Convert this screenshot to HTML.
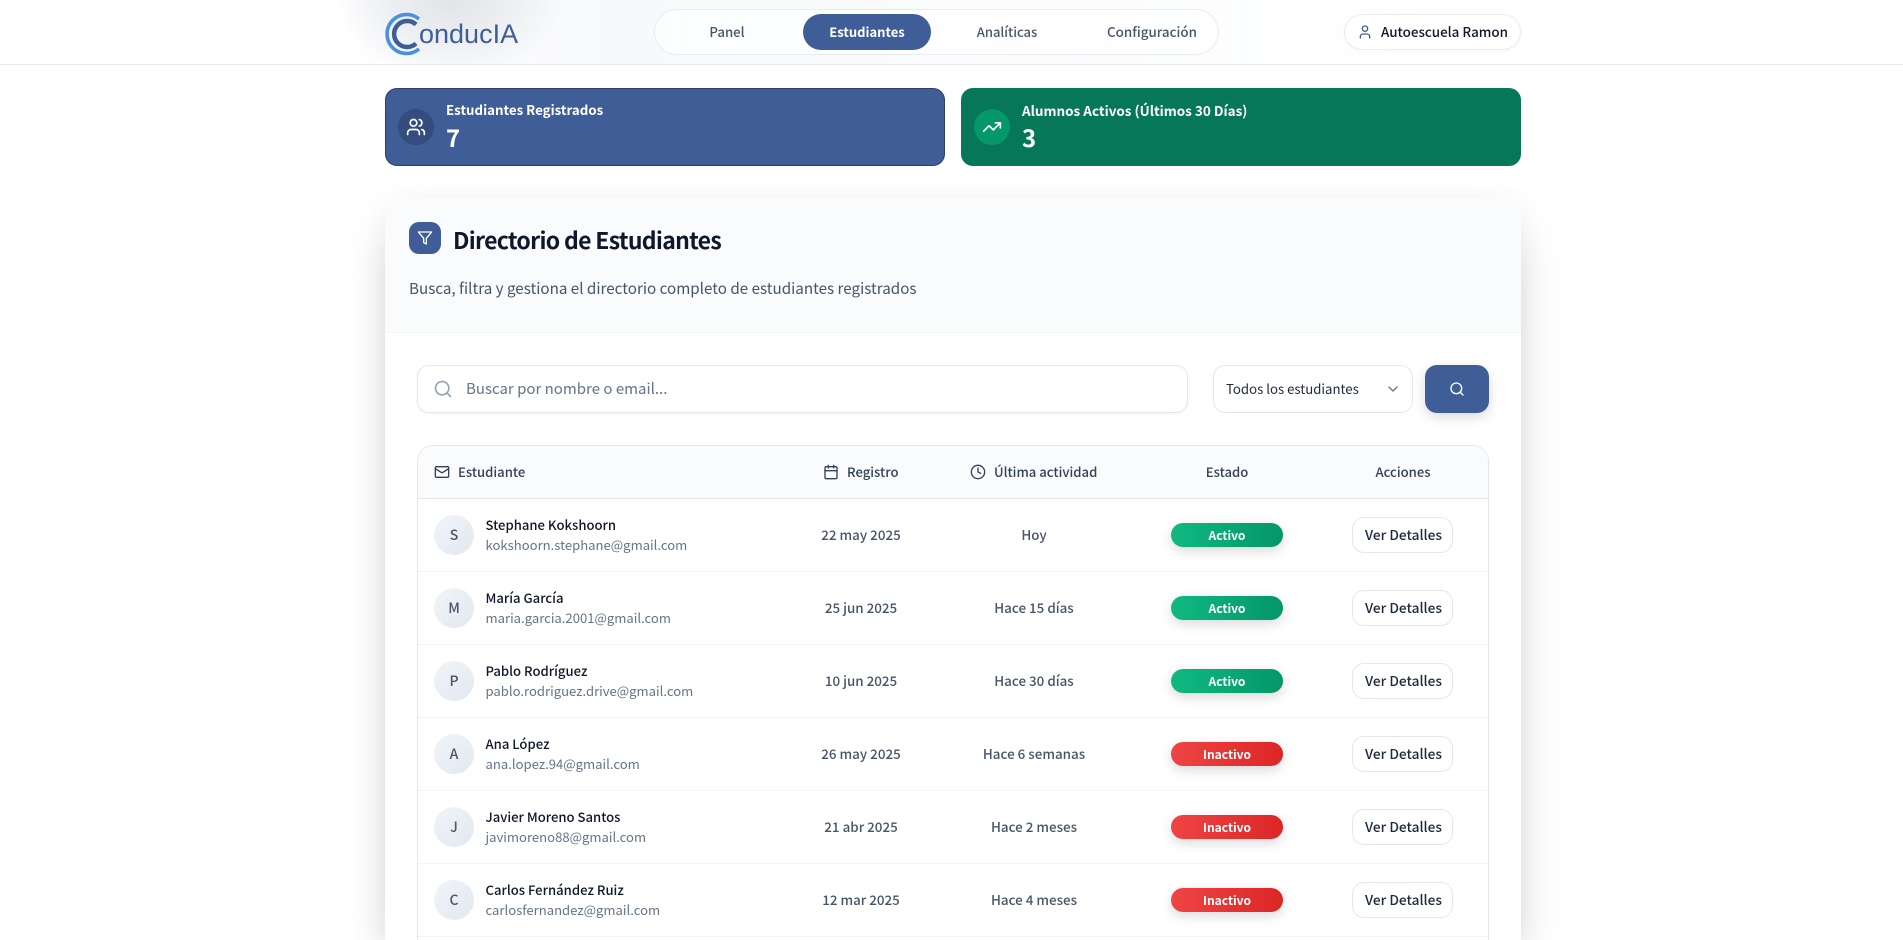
<!DOCTYPE html>
<html lang="es"><head><meta charset="utf-8"><title>ConducIA</title>
<style>
*{box-sizing:border-box;margin:0;padding:0}
html,body{width:1903px;height:940px;overflow:hidden;background:#fff}
body{font-family:"Noto Sans CJK JP","Liberation Sans",sans-serif;position:relative;color:#0f172a}
.a{position:absolute}
.t{position:absolute;white-space:nowrap;line-height:20px}
.ctr{text-align:center;transform:translateX(-50%)}
svg{position:absolute;fill:none;stroke:currentColor;stroke-width:2;stroke-linecap:round;stroke-linejoin:round}
.hdr{left:0;top:0;width:1903px;height:65px;border-bottom:1px solid #e6ebf3;background:radial-gradient(ellipse 115px 80px at 450px 0,#e2e4e8 0,#eceef1 50%,rgba(255,255,255,0) 100%),linear-gradient(90deg,#fff 0,#fff 18%,#f8f9fb 32%,#fafbfc 50%,#fff 75%)}
.row-line{left:418px;width:1070px;height:1px;background:#f1f5f9}
.av{left:434px;width:40px;height:40px;border-radius:50%;background:linear-gradient(135deg,#f1f5f9,#e2e8f0);color:#475569;font-size:14px;font-weight:500;text-align:center;line-height:40px}
.nm{left:485.5px;font-size:13.1px;font-weight:500;color:#0f172a;margin-top:-1px}
.em{left:485.5px;font-size:13.1px;color:#64748b}
.dt{font-size:13.4px;font-weight:500;color:#475569;margin-top:-1px}
.bd{left:1171px;width:112px;height:24px;border-radius:12px;color:#fff;font-size:12px;font-weight:700;text-align:center;line-height:25px;box-shadow:0 4px 12px rgba(0,0,0,.15)}
.ok{background:linear-gradient(90deg,#10b981,#059669)}
.no{background:linear-gradient(90deg,#ef4444,#dc2626)}
.btn{left:1352px;width:101px;height:36px;border:1px solid #e2e8f0;border-radius:12px;background:#fff;color:#1e293b;font-size:13.7px;font-weight:500;text-align:center;line-height:32px;padding-left:2px}
.th{font-size:13.1px;font-weight:500;color:#334155}
</style></head><body>

<div class="a hdr"></div>
<svg style="left:385px;top:12px;stroke-linecap:butt" width="42" height="44" viewBox="0 0 42 44">
<path d="M34 7A19.5 19.5 0 1 0 34 37" stroke="#4a90e2" stroke-width="3.6"/>
<path d="M31 12.5A13 13 0 1 0 31 31.5" stroke="#3f5d96" stroke-width="4.5"/>
</svg>
<div class="t" style="left:419px;top:16px;font-size:27px;line-height:36px;font-weight:400;color:#3f5d96;letter-spacing:0;font-family:'Liberation Sans',sans-serif">onducIA</div>

<div class="a" style="left:654px;top:9px;width:565px;height:46px;border:1px solid #e8edf4;border-radius:23px;background:rgba(255,255,255,.7)"></div>
<div class="a" style="left:803px;top:14px;width:128px;height:36px;border-radius:18px;background:#3f5d96"></div>
<div class="t ctr" style="left:727px;top:22px;font-size:13.2px;font-weight:500;color:#475569">Panel</div>
<div class="t ctr" style="left:867px;top:22px;font-size:13px;font-weight:700;color:#fff">Estudiantes</div>
<div class="t ctr" style="left:1007px;top:22px;font-size:13px;font-weight:500;color:#475569">Analíticas</div>
<div class="t ctr" style="left:1152px;top:21px;font-size:13.4px;font-weight:500;color:#475569">Configuración</div>

<div class="a" style="left:1344px;top:14px;width:177px;height:36px;border:1px solid #e8edf4;border-radius:18px;background:#fff;box-shadow:0 1px 3px rgba(0,0,0,.04)"></div>
<svg style="left:1357px;top:24px;color:#3f5d96;stroke-width:2" width="16" height="16" viewBox="0 0 24 24"><path d="M19 21v-2a4 4 0 0 0-4-4H9a4 4 0 0 0-4 4v2"/><circle cx="12" cy="7" r="4"/></svg>
<div class="t" style="left:1381px;top:21px;font-size:13.4px;font-weight:500;color:#0f172a">Autoescuela Ramon</div>

<div class="a" style="left:385px;top:88px;width:560px;height:78px;border-radius:12px;background:#3f5d96;border:1px solid #2c3e63"></div>
<div class="a" style="left:398px;top:109px;width:36px;height:36px;border-radius:50%;background:#344d7e"></div>
<svg style="left:406px;top:117px;color:#fff" width="20" height="20" viewBox="0 0 24 24"><path d="M16 21v-2a4 4 0 0 0-4-4H6a4 4 0 0 0-4 4v2"/><circle cx="9" cy="7" r="4"/><path d="M22 21v-2a4 4 0 0 0-3-3.87"/><path d="M16 3.13a4 4 0 0 1 0 7.75"/></svg>
<div class="t" style="left:446px;top:100px;font-size:13.3px;font-weight:700;color:#fff">Estudiantes Registrados</div>
<div class="t" style="left:446px;top:122px;font-size:24px;line-height:30px;font-weight:700;color:#fff">7</div>

<div class="a" style="left:961px;top:88px;width:560px;height:78px;border-radius:12px;background:#067857"></div>
<div class="a" style="left:974px;top:109px;width:36px;height:36px;border-radius:50%;background:#059669"></div>
<svg style="left:982px;top:117px;color:#fff" width="20" height="20" viewBox="0 0 24 24"><path d="M22 7l-8.5 8.5-5-5L2 17"/><path d="M16 7h6v6"/></svg>
<div class="t" style="left:1022px;top:100px;font-size:13.5px;font-weight:700;color:#fff">Alumnos Activos (Últimos 30 Días)</div>
<div class="t" style="left:1022px;top:122px;font-size:24px;line-height:30px;font-weight:700;color:#fff">3</div>

<div class="a" style="left:385px;top:198px;width:1136px;height:742px;border-radius:16px 16px 0 0;background:#fff;box-shadow:0 25px 50px -12px rgba(0,0,0,.25),0 0 30px rgba(0,0,0,.03)"></div>
<div class="a" style="left:385px;top:198px;width:1136px;height:135px;border-radius:16px 16px 0 0;background:#fafbfd;border-bottom:1px solid #f1f5f9"></div>
<div class="a" style="left:409px;top:222px;width:32px;height:32px;border-radius:10px;background:#3f5d96"></div>
<svg style="left:417px;top:230px;color:#fff" width="16" height="16" viewBox="0 0 24 24"><path d="M22 3H2l8 9.46V19l4 2v-8.54L22 3z"/></svg>
<div class="t" style="left:453px;top:223px;font-size:23px;letter-spacing:-.7px;line-height:32px;font-weight:700;color:#0f172a">Directorio de Estudiantes</div>
<div class="t" style="left:409px;top:277px;font-size:15.2px;line-height:22px;color:#475569">Busca, filtra y gestiona el directorio completo de estudiantes registrados</div>

<div class="a" style="left:417px;top:365px;width:771px;height:48px;border:1px solid #e2e8f0;border-radius:12px;background:#fff;box-shadow:0 1px 3px rgba(0,0,0,.05)"></div>
<svg style="left:433px;top:379px;color:#94a3b8" width="20" height="20" viewBox="0 0 24 24"><circle cx="11" cy="11" r="8"/><path d="M21 21l-4.3-4.3"/></svg>
<div class="t" style="left:466px;top:379px;font-size:15px;color:#64748b">Buscar por nombre o email...</div>

<div class="a" style="left:1213px;top:365px;width:200px;height:48px;border:1px solid #e2e8f0;border-radius:12px;background:#fff"></div>
<div class="t" style="left:1226px;top:379px;font-size:13.2px;color:#1e293b">Todos los estudiantes</div>
<svg style="left:1385px;top:381px;color:#64748b" width="16" height="16" viewBox="0 0 24 24"><path d="M6 9l6 6 6-6"/></svg>

<div class="a" style="left:1425px;top:365px;width:64px;height:48px;border-radius:12px;background:#3f5d96;box-shadow:0 4px 12px rgba(0,0,0,.15)"></div>
<svg style="left:1449px;top:381px;color:#fff" width="16" height="16" viewBox="0 0 24 24"><circle cx="11" cy="11" r="8"/><path d="M21 21l-4.3-4.3"/></svg>

<div class="a" style="left:417px;top:445px;width:1072px;height:495px;border:1px solid #e2e8f0;border-bottom:0;border-radius:16px 16px 0 0;background:#fff"></div>
<div class="a" style="left:418px;top:446px;width:1070px;height:53px;border-radius:15px 15px 0 0;background:#fafbfd;border-bottom:1px solid #e2e8f0"></div>

<svg style="left:434px;top:464px;color:#334155" width="16" height="16" viewBox="0 0 24 24"><rect x="2" y="4" width="20" height="16" rx="2"/><path d="M22 7l-8.97 5.7a1.94 1.94 0 0 1-2.06 0L2 7"/></svg>
<div class="t th" style="left:458px;top:462px">Estudiante</div>
<svg style="left:823px;top:464px;color:#334155" width="16" height="16" viewBox="0 0 24 24"><path d="M8 2v4"/><path d="M16 2v4"/><rect x="3" y="4" width="18" height="18" rx="2"/><path d="M3 10h18"/></svg>
<div class="t th" style="left:847px;top:462px">Registro</div>
<svg style="left:970px;top:464px;color:#334155" width="16" height="16" viewBox="0 0 24 24"><circle cx="12" cy="12" r="10"/><path d="M12 6v6l4 2"/></svg>
<div class="t th" style="left:994px;top:462px">Última actividad</div>
<div class="t th ctr" style="left:1227px;top:462px">Estado</div>
<div class="t th ctr" style="left:1403px;top:462px">Acciones</div>

<div class="a row-line" style="top:571px"></div>
<div class="a row-line" style="top:644px"></div>
<div class="a row-line" style="top:717px"></div>
<div class="a row-line" style="top:790px"></div>
<div class="a row-line" style="top:863px"></div>
<div class="a row-line" style="top:936px"></div>

<div class="a av" style="top:515px">S</div>
<div class="t nm" style="top:516px">Stephane Kokshoorn</div>
<div class="t em" style="top:535px">kokshoorn.stephane@gmail.com</div>
<div class="t dt ctr" style="left:861px;top:525px">22 may 2025</div>
<div class="t dt ctr" style="left:1034px;top:525px">Hoy</div>
<div class="a bd ok" style="top:523px">Activo</div>
<div class="a btn" style="top:517px">Ver Detalles</div>

<div class="a av" style="top:588px">M</div>
<div class="t nm" style="top:589px">María García</div>
<div class="t em" style="top:608px">maria.garcia.2001@gmail.com</div>
<div class="t dt ctr" style="left:861px;top:598px">25 jun 2025</div>
<div class="t dt ctr" style="left:1034px;top:598px">Hace 15 días</div>
<div class="a bd ok" style="top:596px">Activo</div>
<div class="a btn" style="top:590px">Ver Detalles</div>

<div class="a av" style="top:661px">P</div>
<div class="t nm" style="top:662px">Pablo Rodríguez</div>
<div class="t em" style="top:681px">pablo.rodriguez.drive@gmail.com</div>
<div class="t dt ctr" style="left:861px;top:671px">10 jun 2025</div>
<div class="t dt ctr" style="left:1034px;top:671px">Hace 30 días</div>
<div class="a bd ok" style="top:669px">Activo</div>
<div class="a btn" style="top:663px">Ver Detalles</div>

<div class="a av" style="top:734px">A</div>
<div class="t nm" style="top:735px">Ana López</div>
<div class="t em" style="top:754px">ana.lopez.94@gmail.com</div>
<div class="t dt ctr" style="left:861px;top:744px">26 may 2025</div>
<div class="t dt ctr" style="left:1034px;top:744px">Hace 6 semanas</div>
<div class="a bd no" style="top:742px">Inactivo</div>
<div class="a btn" style="top:736px">Ver Detalles</div>

<div class="a av" style="top:807px">J</div>
<div class="t nm" style="top:808px">Javier Moreno Santos</div>
<div class="t em" style="top:827px">javimoreno88@gmail.com</div>
<div class="t dt ctr" style="left:861px;top:817px">21 abr 2025</div>
<div class="t dt ctr" style="left:1034px;top:817px">Hace 2 meses</div>
<div class="a bd no" style="top:815px">Inactivo</div>
<div class="a btn" style="top:809px">Ver Detalles</div>

<div class="a av" style="top:880px">C</div>
<div class="t nm" style="top:881px">Carlos Fernández Ruiz</div>
<div class="t em" style="top:900px">carlosfernandez@gmail.com</div>
<div class="t dt ctr" style="left:861px;top:890px">12 mar 2025</div>
<div class="t dt ctr" style="left:1034px;top:890px">Hace 4 meses</div>
<div class="a bd no" style="top:888px">Inactivo</div>
<div class="a btn" style="top:882px">Ver Detalles</div>

</body></html>
